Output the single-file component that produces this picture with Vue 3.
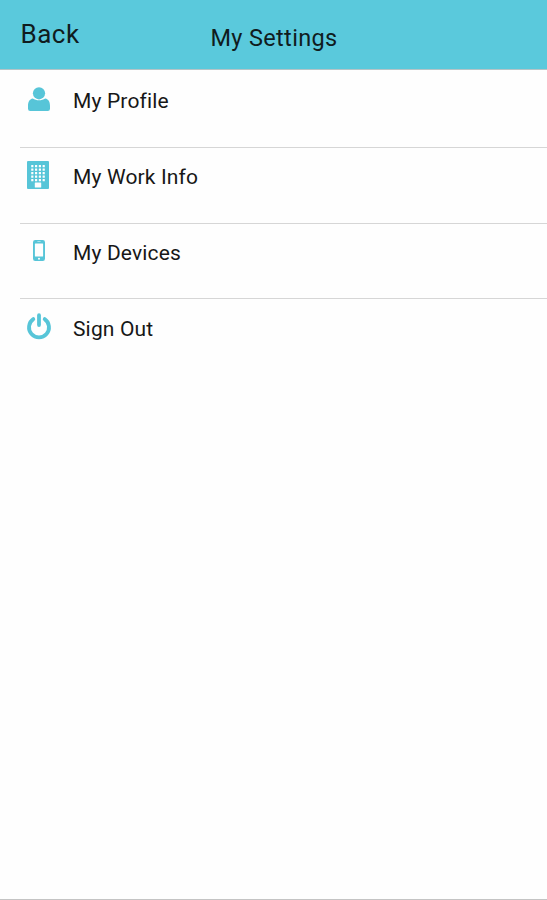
<script setup>
const items = [
  { id: "profile", label: "My Profile" },
  { id: "work", label: "My Work Info" },
  { id: "devices", label: "My Devices" },
  { id: "signout", label: "Sign Out" },
];

const windowRows = [4, 7.5, 11, 14.5, 18];
const windowCols = [4.2, 8, 11.8, 15.6];
</script>

<template>
  <div class="screen">
    <header class="header">
      <button class="back" type="button">Back</button>
      <h1 class="title">My Settings</h1>
    </header>

    <ul class="menu">
      <li v-for="item in items" :key="item.id" class="menu-item">
        <span class="icon">
          <svg v-if="item.id === 'profile'" width="22" height="24" viewBox="0 0 22 24">
            <path
              d="M4.8 11.4C1.4 12 0 15 0 19V21.8Q0 24 2.2 24H19.8Q22 24 22 21.8V19C22 15 20.6 12 17.2 11.4C15.4 12.6 13.4 13.2 11 13.2S6.6 12.6 4.8 11.4Z"
            />
            <circle cx="11" cy="6.3" r="6.1" />
          </svg>
          <svg
            v-else-if="item.id === 'work'"
            class="building"
            width="22"
            height="28"
            viewBox="0 0 22 28"
          >
            <rect width="22" height="28" rx="1" />
            <g class="cutout">
              <template v-for="y in windowRows" :key="y">
                <rect
                  v-for="x in windowCols"
                  :key="x"
                  :x="x"
                  :y="y"
                  width="2.2"
                  height="2.2"
                  rx="0.3"
                />
              </template>
              <rect x="7.8" y="21.6" width="6.4" height="5" rx="0.5" />
            </g>
          </svg>
          <svg v-else-if="item.id === 'devices'" width="12" height="21" viewBox="0 0 12 21">
            <path
              fill-rule="evenodd"
              d="M2.2 0H9.8Q12 0 12 2.2V18.8Q12 21 9.8 21H2.2Q0 21 0 18.8V2.2Q0 0 2.2 0ZM2.4 3.5Q1.9 3.5 1.9 4V16Q1.9 16.5 2.4 16.5H9.6Q10.1 16.5 10.1 16V4Q10.1 3.5 9.6 3.5ZM4.4 1.4V2.1H7.6V1.4ZM6 17.7A1 1 0 1 0 6 19.7A1 1 0 1 0 6 17.7Z"
            />
          </svg>
          <svg v-else class="power" width="24" height="26" viewBox="0 0 24 26">
            <path d="M6.3 5.1A10 10 0 1 0 17.7 5.1" />
            <path d="M12 1.2V11" />
          </svg>
        </span>
        <span class="label">{{ item.label }}</span>
      </li>
    </ul>
  </div>
</template>

<style>
body {
  margin: 0;
  background: #fefefe;
}
</style>

<style scoped>
.screen {
  display: flex;
  flex-direction: column;
  box-sizing: border-box;
  height: 100vh;
  border-bottom: 1px solid #c4c4c4;
  color: #171717;
  background: #fefefe;
  font-family: Roboto, "Liberation Sans", sans-serif;
}

.header {
  display: grid;
  grid-template-columns: 1fr auto 1fr;
  box-sizing: border-box;
  height: 70px;
  border-bottom: 1px solid #b5c4c7;
  background: #5ac9dc;
}

.back {
  justify-self: start;
  align-self: start;
  margin: 17px 0 0 20.5px;
  padding: 0;
  border: 0;
  color: #101c1e;
  background: none;
  font: inherit;
  font-size: 26px;
  line-height: 34px;
  letter-spacing: 0.5px;
}

.title {
  margin: 21px 0 0 1px;
  color: #101c1e;
  font-size: 23.5px;
  font-weight: 400;
  line-height: 34px;
  letter-spacing: 0.35px;
}

.menu {
  margin: 0;
  padding: 0 0 0 20px;
  list-style: none;
}

.menu-item {
  display: flex;
  align-items: flex-start;
  box-sizing: border-box;
  height: 75.7px;
  padding-top: 13px;
}

.menu-item:first-child {
  height: 77px;
  padding-top: 15px;
}

.menu-item:last-child {
  padding-top: 13.6px;
}

.menu-item + .menu-item {
  border-top: 1px solid #d6d6d6;
}

.icon {
  display: flex;
  align-items: center;
  justify-content: center;
  width: 38px;
  height: 28px;
}

.icon svg {
  display: block;
  fill: #57c5d8;
}

.icon .building {
  margin-right: 2px;
}

.icon .cutout {
  fill: #fefefe;
}

.icon .power {
  overflow: visible;
  fill: none;
  stroke: #57c5d8;
  stroke-width: 3.8;
  stroke-linecap: round;
}

.label {
  margin-left: 15px;
  font-size: 21px;
  line-height: 32px;
  letter-spacing: 0.15px;
}
</style>
